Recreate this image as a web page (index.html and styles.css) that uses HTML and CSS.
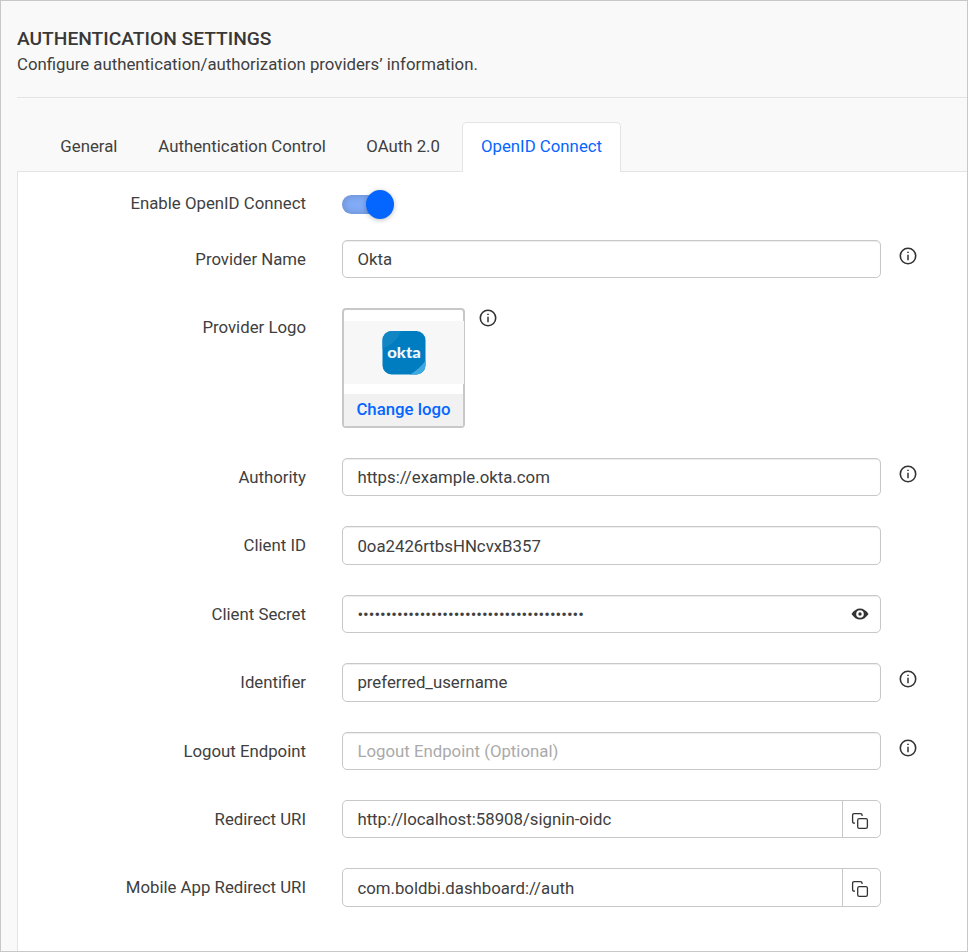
FILE: index.html
```html
<!DOCTYPE html>
<html lang="en">
<head>
<meta charset="utf-8">
<title>Authentication Settings</title>
<link rel="stylesheet" href="styles.css">
</head>
<body>
<svg class="symbols" width="0" height="0" aria-hidden="true">
  <symbol id="info" viewBox="0 0 18 18"><circle cx="9" cy="9" r="7.7" fill="none" stroke="#333" stroke-width="1.6"/><path d="M9 7.7v5.5" stroke="#333" stroke-width="1.5"/><path d="M9 4.7v1.4" stroke="#333" stroke-width="1.6"/></symbol>
  <symbol id="copy" viewBox="0 0 18 18"><rect x="6.7" y="6.7" width="9.7" height="9.7" rx="1.6" fill="none" stroke="#333" stroke-width="1.3"/><path d="M4 11.1H3.2Q1.6 11.1 1.6 9.5V3.2Q1.6 1.6 3.2 1.6H9.5Q11.1 1.6 11.1 3.2V4" fill="none" stroke="#333" stroke-width="1.3"/></symbol>
</svg>
<main class="page">
  <header class="header">
    <h1>AUTHENTICATION SETTINGS</h1>
    <p>Configure authentication/authorization providers’ information.</p>
  </header>
  <nav class="tabs">
    <a class="tab general">General</a>
    <a class="tab control-tab">Authentication Control</a>
    <a class="tab oauth">OAuth 2.0</a>
    <a class="tab active">OpenID Connect</a>
  </nav>
  <section class="panel">
    <div class="row toggle-row"><label>Enable OpenID Connect</label><span class="switch"><span class="knob"></span></span></div>
    <div class="row"><label>Provider Name</label><div class="field">Okta</div><svg class="info"><use href="#info"/></svg></div>
    <div class="row logo-row"><label>Provider Logo</label>
      <div class="logo-box">
        <div class="preview">
          <svg width="44" height="44" viewBox="0 0 44 44">
            <defs><clipPath id="tile"><rect x=".5" width="43" height="43.5" rx="9"/></clipPath></defs>
            <g clip-path="url(#tile)"><rect width="44" height="44" fill="#007dc1"/><path d="M0 0H19Q14 13 0 18Z" fill="#1285c5"/><path d="M27 44Q38 38 44 29V44Z" fill="#3ea8df"/></g>
            <text class="logo-text" x="22" y="27" text-anchor="middle" textLength="33.5" lengthAdjust="spacingAndGlyphs">okta</text>
          </svg>
        </div>
        <a class="change">Change logo</a>
      </div>
      <svg class="info logo-info"><use href="#info"/></svg></div>
    <div class="row"><label>Authority</label><div class="field">https://example.okta.com</div><svg class="info"><use href="#info"/></svg></div>
    <div class="row"><label>Client ID</label><div class="field">0oa2426rtbsHNcvxB357</div></div>
    <div class="row"><label>Client Secret</label><div class="field secret"><span class="dots">••••••••••••••••••••••••••••••••••••••••</span><svg class="eye" viewBox="0 0 18 12"><path d="M.5 6Q4.2.5 9 .5T17.5 6Q13.8 11.5 9 11.5T.5 6Z" fill="#333"/><circle cx="9" cy="6" r="3.8" fill="#fff"/><circle cx="9" cy="6" r="1.7" fill="#333"/></svg></div></div>
    <div class="row"><label>Identifier</label><div class="field">preferred_username</div><svg class="info"><use href="#info"/></svg></div>
    <div class="row"><label>Logout Endpoint</label><div class="field placeholder">Logout Endpoint (Optional)</div><svg class="info"><use href="#info"/></svg></div>
    <div class="row"><label>Redirect URI</label><div class="field flat"><span>http://localhost:58908/signin-oidc</span><span class="copy"><svg><use href="#copy"/></svg></span></div></div>
    <div class="row"><label>Mobile App Redirect URI</label><div class="field flat"><span>com.boldbi.dashboard://auth</span><span class="copy"><svg><use href="#copy"/></svg></span></div></div>
  </section>
</main>
</body>
</html>
```

FILE: styles.css
```css
* { box-sizing: border-box; }
body { margin: 0; font: 16.8px/22px Roboto, sans-serif; color: #404040; }
.symbols { display: none; }
.page {
  display: flex;
  flex-direction: column;
  height: 952px;
  padding-left: 16px;
  border: 1px solid #c8c8c8;
  background: #f9f9f9;
  overflow: hidden;
}
.header { height: 97px; padding-top: 25px; border-bottom: 1px solid #e4e4e4; }
h1 { margin: 0; font-size: 19.2px; line-height: 26px; font-weight: 500; color: #383838; }
p { margin: 0; line-height: 24px; }
.tabs { display: flex; height: 74px; padding: 24px 0 0 24.3px; }
.tab { height: 49px; padding: 0 18px; border: 1px solid transparent; line-height: 47px; white-space: nowrap; }
.general { width: 98px; }
.control-tab { width: 208px; }
.oauth { width: 114.7px; }
.active {
  width: 159px;
  height: 50px;
  border-color: #e4e4e4;
  border-bottom: 0;
  border-radius: 5px 5px 0 0;
  background: #fff;
  color: #0565ff;
  position: relative;
  z-index: 1;
}
.panel { flex: 1; margin-top: -1px; border: solid #e4e4e4; border-width: 1px 0 0 1px; background: #fff; }
.row { display: flex; height: 38.4px; margin-bottom: 30px; }
label { width: 288px; margin-right: 36px; line-height: 38px; text-align: right; }
.toggle-row { margin: 12px 0 17.6px; }
.switch {
  width: 50px;
  height: 19px;
  margin-top: 11px;
  border-radius: 10px;
  background: #82acf8;
  box-shadow: inset 0 0 8px #00000033;
}
.knob {
  display: block;
  width: 28px;
  height: 29px;
  margin: -5px 0 0 24px;
  border-radius: 50%;
  background: #0565ff;
  box-shadow: 0 1px 5px #0004;
}
.field {
  display: flex;
  align-items: center;
  width: 539px;
  height: 38.4px;
  padding-left: 14.4px;
  border: 1px solid #c8c8c8;
  border-radius: 5px;
  background: #fff;
  box-shadow: inset 0 1px 1px #00000013;
}
.flat { box-shadow: none; }
.info { width: 18px; height: 18px; margin: 7px 0 0 18px; }
.logo-row { height: 119.6px; }
.logo-box {
  display: flex;
  flex-direction: column;
  width: 123px;
  height: 120px;
  padding-top: 11px;
  border: 2px solid #c8c8c8;
  border-radius: 4px;
}
.preview { display: flex; align-items: center; justify-content: center; height: 63px; margin-right: -1px; background: #f7f7f7; }
.logo-text { font: 900 14.5px Lato, sans-serif; fill: #f2f8fc; }
.change { height: 32px; margin-top: 10px; background: #f1f1f1; color: #0565ff; font-weight: 500; line-height: 31px; text-align: center; }
.logo-info { margin: 1px 0 0 14px; }
.dots { white-space: nowrap; }
.eye { width: 18px; height: 12px; margin: 0 11px 0 auto; }
.placeholder { color: #aaa; }
.copy { display: flex; align-items: center; justify-content: center; width: 38px; height: 100%; margin-left: auto; border-left: 1px solid #c8c8c8; }
.copy svg { width: 18px; height: 18px; margin: 3px 2.5px 0 0; }
```
